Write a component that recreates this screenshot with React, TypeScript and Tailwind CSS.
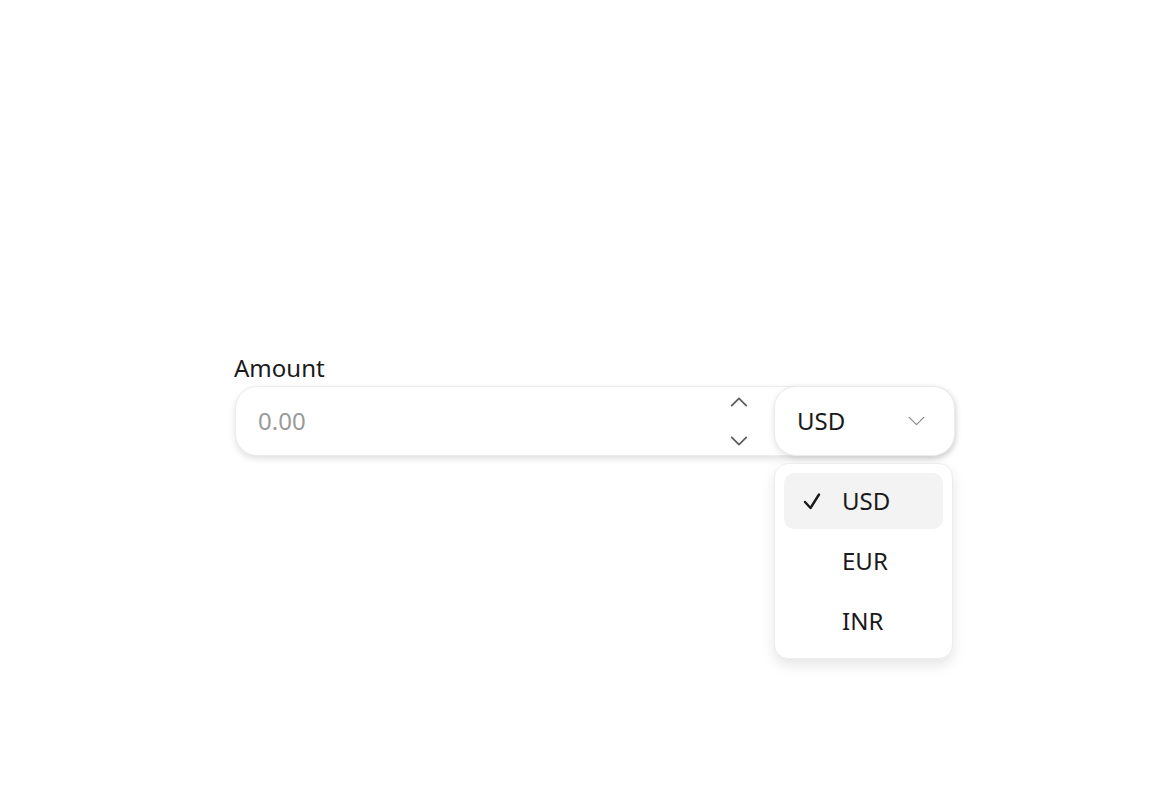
import React from 'react';

function Chevron({ dir, className, width = 1.8 }: { dir: 'up' | 'down'; className?: string; width?: number }) {
  return (
    <svg viewBox="0 0 20 11" className={className} fill="none" stroke="currentColor" strokeWidth={width} strokeLinecap="round" strokeLinejoin="round">
      {dir === 'up' ? <path d="M2 9.5l8-8 8 8" /> : <path d="M2 1.5l8 8 8-8" />}
    </svg>
  );
}

export default function App() {
  const options = ['USD', 'EUR', 'INR'];
  return (
    <div className="w-[1176px] h-[788px] bg-white" style={{ fontFamily: '"Noto Sans", "Open Sans", sans-serif' }}>
      <div className="pt-[350px] pl-[235px]">
        <label className="block text-[24px] leading-[35px] -ml-px text-[#1a1a1a]">Amount</label>
        <div className="relative mt-px w-[720px] h-[70px] flex rounded-[22px] bg-white border border-[#ececec] shadow-[0_3px_6px_rgba(0,0,0,0.12)]">
          <div className="flex-1 flex items-center pl-[22px] pr-[25px]">
            <span className="flex-1 text-[24px] text-[#9a9a9a]">0.00</span>
            <div className="flex flex-col gap-[29px] text-[#5e5e5e]">
              <Chevron dir="up" className="w-[20px] h-[10px]" width={2} />
              <Chevron dir="down" className="w-[20px] h-[10px]" width={2} />
            </div>
          </div>
          <div className="w-[181px] -my-px -mr-px flex items-center pl-[22px] pr-[28px] rounded-[22px] bg-white border border-[#ececec] shadow-[0_2px_6px_rgba(0,0,0,0.12)]">
            <span className="flex-1 text-[24px] text-[#1a1a1a]">USD</span>
            <Chevron dir="down" className="w-[19px] h-[10px] text-[#8c8c8c]" width={1.4} />
          </div>
          <div className="absolute left-[538px] top-[76px] w-[179px] rounded-[14px] bg-white border border-[#ededed] shadow-[0_6px_14px_rgba(0,0,0,0.1)] p-[9px] flex flex-col gap-[4px]">
            {options.map((o, i) => (
              <div key={o} className={`h-[56px] flex items-center rounded-[10px] ${i === 0 ? 'bg-[#f3f3f3]' : ''}`}>
                <span className="w-[58px] pl-[19px] flex items-center">
                  {i === 0 && (
                    <svg viewBox="0 0 18 18" className="w-[18px] h-[18px] text-[#1a1a1a]" fill="none" stroke="currentColor" strokeWidth={2.4} strokeLinecap="round" strokeLinejoin="round">
                      <path d="M2 10l5.5 6L16 2.5" />
                    </svg>
                  )}
                </span>
                <span className="text-[24px] text-[#1a1a1a]">{o}</span>
              </div>
            ))}
          </div>
        </div>
      </div>
    </div>
  );
}
